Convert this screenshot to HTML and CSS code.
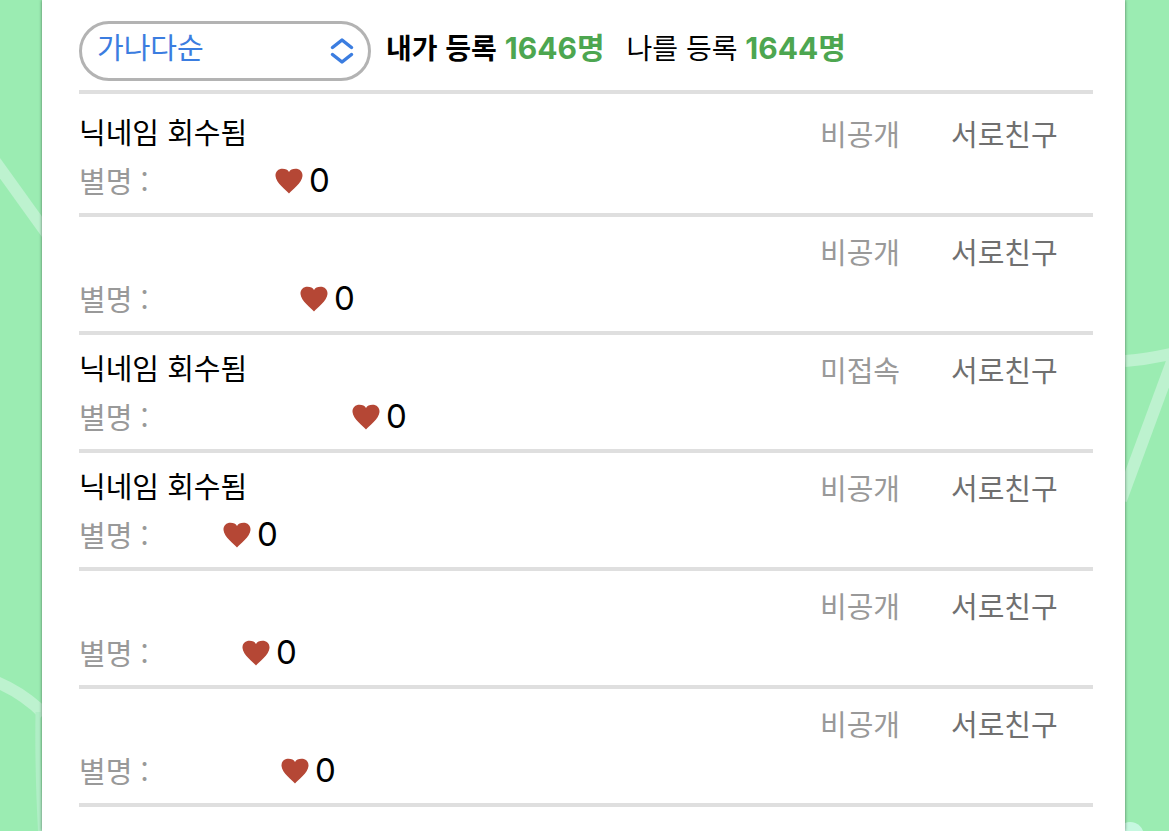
FILE: index.html
```
<!DOCTYPE html>
<html lang="ko">
<head>
    <meta charset="utf-8">
    <meta name="viewport" content="width=device-width, initial-scale=1.0">
    <title>친구 목록</title>
    <link rel="stylesheet" href="styles.css">
</head>

<body>
    <svg class="deco deco-left" viewBox="0 0 42 831" aria-hidden="true">
        <path d="M-6 160 L48 235" />
        <path d="M-6 681 Q22 692 44 714" />
        <path class="thin" d="M38 712 Q37 770 41 840" />
    </svg>
    <svg class="deco deco-right" viewBox="0 0 44 831" aria-hidden="true">
        <path d="M0 361 Q24 359 50 353" />
        <path d="M48 359 L-4 500" />
        <circle cx="5" cy="836" r="14" />
    </svg>

    <svg class="symbols" aria-hidden="true">
        <symbol id="heart" viewBox="0 0 28 26">
            <path d="M14 25.500C11 22 1 15 0.500 8C0.200 3.500 3.500 0.800 7.500 0.800C10.500 0.800 12.900 2 14 4C15.100 2 17.500 0.800 20.500 0.800C24.500 0.800 27.800 3.500 27.500 8C27 15 17 22 14 25.500Z" />
        </symbol>
    </svg>

    <main class="panel">
        <header class="toolbar">
            <div class="sort">
                <select class="sort-select" aria-label="정렬">
                    <option>가나다순</option>
                </select>
                <svg class="sort-arrow" viewBox="0 0 24 28" aria-hidden="true">
                    <path d="M2.500 10.500L12 3L21.500 10.500M2.500 17.500L12 25L21.500 17.500" />
                </svg>
            </div>
            <p class="count count-active">내가 등록 <b>1646명</b></p>
            <p class="count">나를 등록 <b>1644명</b></p>
        </header>

        <ul class="friends">
            <li class="friend">
                <div class="info">
                    <div class="name">닉네임 회수됨</div>
                    <div class="alias">
                        <span class="alias-label">별명 :</span>
                        <span style="width: 121px"></span>
                        <svg class="heart"><use href="#heart" /></svg>
                        <span class="likes">0</span>
                    </div>
                </div>
                <span class="status">비공개</span>
                <span class="relation">서로친구</span>
            </li>
            <li class="friend">
                <div class="info">
                    <div class="name"></div>
                    <div class="alias">
                        <span class="alias-label">별명 :</span>
                        <span style="width: 146px"></span>
                        <svg class="heart"><use href="#heart" /></svg>
                        <span class="likes">0</span>
                    </div>
                </div>
                <span class="status">비공개</span>
                <span class="relation">서로친구</span>
            </li>
            <li class="friend">
                <div class="info">
                    <div class="name">닉네임 회수됨</div>
                    <div class="alias">
                        <span class="alias-label">별명 :</span>
                        <span style="width: 198px"></span>
                        <svg class="heart"><use href="#heart" /></svg>
                        <span class="likes">0</span>
                    </div>
                </div>
                <span class="status">미접속</span>
                <span class="relation">서로친구</span>
            </li>
            <li class="friend">
                <div class="info">
                    <div class="name">닉네임 회수됨</div>
                    <div class="alias">
                        <span class="alias-label">별명 :</span>
                        <span style="width: 69px"></span>
                        <svg class="heart"><use href="#heart" /></svg>
                        <span class="likes">0</span>
                    </div>
                </div>
                <span class="status">비공개</span>
                <span class="relation">서로친구</span>
            </li>
            <li class="friend">
                <div class="info">
                    <div class="name"></div>
                    <div class="alias">
                        <span class="alias-label">별명 :</span>
                        <span style="width: 88px"></span>
                        <svg class="heart"><use href="#heart" /></svg>
                        <span class="likes">0</span>
                    </div>
                </div>
                <span class="status">비공개</span>
                <span class="relation">서로친구</span>
            </li>
            <li class="friend">
                <div class="info">
                    <div class="name"></div>
                    <div class="alias">
                        <span class="alias-label">별명 :</span>
                        <span style="width: 127px"></span>
                        <svg class="heart"><use href="#heart" /></svg>
                        <span class="likes">0</span>
                    </div>
                </div>
                <span class="status">비공개</span>
                <span class="relation">서로친구</span>
            </li>
        </ul>
    </main>
</body>
</html>
```

FILE: styles.css
```
* {
    box-sizing: border-box;
}

body {
    position: relative;
    margin: 0;
    padding: 0 44px 0 42px;
    min-height: 100vh;
    background-color: #9becb2;
    color: #000;
    font-family: "Noto Sans CJK KR", sans-serif;
    font-size: 29px;
    overflow-x: hidden;
}

/* background lines beside the panel */
.deco {
    position: absolute;
    top: 0;
    height: 831px;
    fill: none;
    stroke: #bdf2cf;
    stroke-width: 12px;
}

.deco-left {
    left: 0;
    width: 42px;
}

.deco-right {
    right: 0;
    width: 44px;
}

.deco .thin {
    stroke: #b0eec6;
    stroke-width: 5px;
}

.deco circle {
    fill: #c6f8e0;
    stroke: none;
}

.symbols {
    display: none;
}

.panel {
    position: relative;
    min-height: 100vh;
    padding: 21px 32px 0 37px;
    background-color: #fff;
    box-shadow: 0 0 3px rgba(0, 0, 0, 0.5);
}

.toolbar {
    display: flex;
    align-items: flex-start;
    padding-bottom: 9px;
    border-bottom: 4px solid #dfdfdf;
}

.sort {
    position: relative;
    width: 292px;
    margin-right: 15px;
}

.sort-select {
    display: block;
    appearance: none;
    width: 100%;
    height: 60px;
    padding: 0 48px 10px 15px;
    border: 3px solid #b3b3b3;
    border-radius: 30px;
    background-color: #fff;
    color: #3b7de0;
    font: inherit;
}

.sort-arrow {
    position: absolute;
    top: 16px;
    right: 17px;
    width: 24px;
    height: 28px;
    fill: none;
    stroke: #3b7de0;
    stroke-width: 3.5px;
    stroke-linecap: round;
    stroke-linejoin: round;
    pointer-events: none;
}

.count {
    margin: 0 22px 0 0;
    font-size: 28px;
    line-height: 52px;
}

.count-active {
    font-weight: bold;
}

.count b {
    color: #4da650;
    font-family: Inter, "Noto Sans CJK KR", sans-serif;
    font-size: 30px;
    font-weight: 700;
}

.friends {
    margin: 0;
    padding: 5px 0 0;
    list-style: none;
}

.friend {
    display: grid;
    grid-template-columns: 1fr 131px 142px;
    padding: 8px 0;
    border-bottom: 4px solid #dfdfdf;
}

.name {
    height: 49px;
    line-height: 49px;
}

.alias {
    display: flex;
    align-items: center;
    height: 49px;
    line-height: 49px;
}

.alias-label {
    width: 75px;
    color: #999;
}

.heart {
    width: 28px;
    height: 26px;
    margin-right: 6px;
    fill: #b54735;
}

.likes {
    font-family: Inter, sans-serif;
    font-size: 33px;
}

.status,
.relation {
    line-height: 53px;
}

.status {
    color: #999;
}

.relation {
    color: #707070;
}
```
